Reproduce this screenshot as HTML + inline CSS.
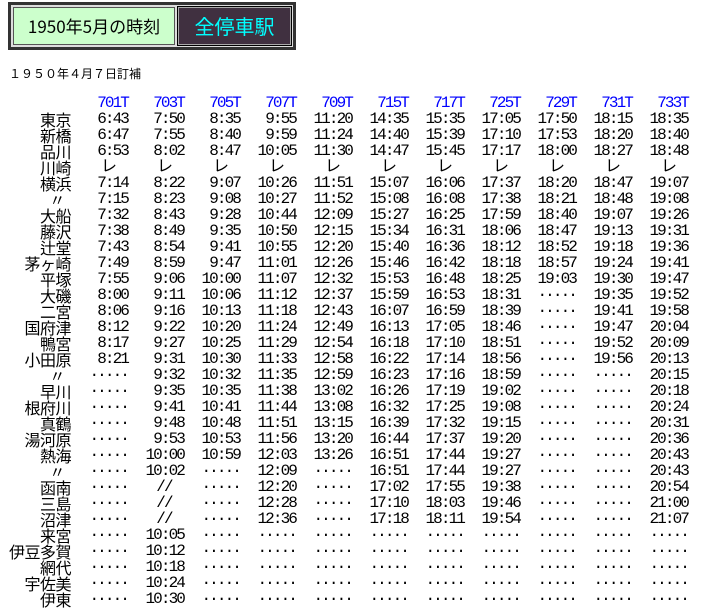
<!DOCTYPE html>
<html><head><meta charset="utf-8"><style>
body{margin:0;background:#fff;font-family:"Liberation Sans","Noto Sans CJK JP",sans-serif;}
.box{position:absolute;left:8px;top:2px;width:282px;height:42px;border:3px solid #333;background:#ddd;}
.g{position:absolute;left:2px;top:2px;width:160px;height:36px;background:#ccffcc;border:1px solid #555;font-size:17px;line-height:36px;text-align:center;color:#000;font-family:"Noto Sans CJK JP",sans-serif;}
.d{position:absolute;left:167px;top:2px;width:111px;height:36px;background:#403040;border:1px solid #aaa;outline:1px solid #000;font-size:20px;line-height:36px;text-align:center;color:#00ffff;font-family:"Noto Sans CJK JP",sans-serif;}
.sub{position:absolute;left:9px;top:65px;font-size:12px;letter-spacing:0px;font-family:"Noto Sans CJK JP",sans-serif;}
table{position:absolute;left:0;top:95px;border-collapse:collapse;table-layout:fixed;width:687px;}
td{padding:0;height:16px;line-height:16px;text-align:right;width:56px;font-family:"Liberation Mono",monospace;font-size:16px;letter-spacing:-1.9px;white-space:nowrap;overflow:visible;}
td:first-child{width:71px;font-family:"Noto Sans CJK JP",sans-serif;letter-spacing:-0.5px;font-size:16px;padding-right:1px;}
tr.h td{color:#00f;}
td.c{text-align:center;padding-left:16px;}
</style></head><body>
<div class="box"><div class="g">1950年5月の時刻</div><div class="d">全停車駅</div></div>
<div class="sub">１９５０年４月７日訂補</div>
<table>
<colgroup><col style="width:72px"><col style="width:56px"><col style="width:56px"><col style="width:56px"><col style="width:56px"><col style="width:56px"><col style="width:56px"><col style="width:56px"><col style="width:56px"><col style="width:56px"><col style="width:56px"><col style="width:56px"></colgroup>
<tr class="h"><td></td><td>701T</td><td>703T</td><td>705T</td><td>707T</td><td>709T</td><td>715T</td><td>717T</td><td>725T</td><td>729T</td><td>731T</td><td>733T</td></tr>
<tr><td>東京</td><td>6:43</td><td>7:50</td><td>8:35</td><td>9:55</td><td>11:20</td><td>14:35</td><td>15:35</td><td>17:05</td><td>17:50</td><td>18:15</td><td>18:35</td></tr>
<tr><td>新橋</td><td>6:47</td><td>7:55</td><td>8:40</td><td>9:59</td><td>11:24</td><td>14:40</td><td>15:39</td><td>17:10</td><td>17:53</td><td>18:20</td><td>18:40</td></tr>
<tr><td>品川</td><td>6:53</td><td>8:02</td><td>8:47</td><td>10:05</td><td>11:30</td><td>14:47</td><td>15:45</td><td>17:17</td><td>18:00</td><td>18:27</td><td>18:48</td></tr>
<tr><td>川崎</td><td class="c">レ</td><td class="c">レ</td><td class="c">レ</td><td class="c">レ</td><td class="c">レ</td><td class="c">レ</td><td class="c">レ</td><td class="c">レ</td><td class="c">レ</td><td class="c">レ</td><td class="c">レ</td></tr>
<tr><td>横浜</td><td>7:14</td><td>8:22</td><td>9:07</td><td>10:26</td><td>11:51</td><td>15:07</td><td>16:06</td><td>17:37</td><td>18:20</td><td>18:47</td><td>19:07</td></tr>
<tr><td>〃&nbsp;&nbsp;</td><td>7:15</td><td>8:23</td><td>9:08</td><td>10:27</td><td>11:52</td><td>15:08</td><td>16:08</td><td>17:38</td><td>18:21</td><td>18:48</td><td>19:08</td></tr>
<tr><td>大船</td><td>7:32</td><td>8:43</td><td>9:28</td><td>10:44</td><td>12:09</td><td>15:27</td><td>16:25</td><td>17:59</td><td>18:40</td><td>19:07</td><td>19:26</td></tr>
<tr><td>藤沢</td><td>7:38</td><td>8:49</td><td>9:35</td><td>10:50</td><td>12:15</td><td>15:34</td><td>16:31</td><td>18:06</td><td>18:47</td><td>19:13</td><td>19:31</td></tr>
<tr><td>辻堂</td><td>7:43</td><td>8:54</td><td>9:41</td><td>10:55</td><td>12:20</td><td>15:40</td><td>16:36</td><td>18:12</td><td>18:52</td><td>19:18</td><td>19:36</td></tr>
<tr><td>茅ヶ崎</td><td>7:49</td><td>8:59</td><td>9:47</td><td>11:01</td><td>12:26</td><td>15:46</td><td>16:42</td><td>18:18</td><td>18:57</td><td>19:24</td><td>19:41</td></tr>
<tr><td>平塚</td><td>7:55</td><td>9:06</td><td>10:00</td><td>11:07</td><td>12:32</td><td>15:53</td><td>16:48</td><td>18:25</td><td>19:03</td><td>19:30</td><td>19:47</td></tr>
<tr><td>大磯</td><td>8:00</td><td>9:11</td><td>10:06</td><td>11:12</td><td>12:37</td><td>15:59</td><td>16:53</td><td>18:31</td><td>·····</td><td>19:35</td><td>19:52</td></tr>
<tr><td>二宮</td><td>8:06</td><td>9:16</td><td>10:13</td><td>11:18</td><td>12:43</td><td>16:07</td><td>16:59</td><td>18:39</td><td>·····</td><td>19:41</td><td>19:58</td></tr>
<tr><td>国府津</td><td>8:12</td><td>9:22</td><td>10:20</td><td>11:24</td><td>12:49</td><td>16:13</td><td>17:05</td><td>18:46</td><td>·····</td><td>19:47</td><td>20:04</td></tr>
<tr><td>鴨宮</td><td>8:17</td><td>9:27</td><td>10:25</td><td>11:29</td><td>12:54</td><td>16:18</td><td>17:10</td><td>18:51</td><td>·····</td><td>19:52</td><td>20:09</td></tr>
<tr><td>小田原</td><td>8:21</td><td>9:31</td><td>10:30</td><td>11:33</td><td>12:58</td><td>16:22</td><td>17:14</td><td>18:56</td><td>·····</td><td>19:56</td><td>20:13</td></tr>
<tr><td>〃&nbsp;&nbsp;</td><td>·····</td><td>9:32</td><td>10:32</td><td>11:35</td><td>12:59</td><td>16:23</td><td>17:16</td><td>18:59</td><td>·····</td><td>·····</td><td>20:15</td></tr>
<tr><td>早川</td><td>·····</td><td>9:35</td><td>10:35</td><td>11:38</td><td>13:02</td><td>16:26</td><td>17:19</td><td>19:02</td><td>·····</td><td>·····</td><td>20:18</td></tr>
<tr><td>根府川</td><td>·····</td><td>9:41</td><td>10:41</td><td>11:44</td><td>13:08</td><td>16:32</td><td>17:25</td><td>19:08</td><td>·····</td><td>·····</td><td>20:24</td></tr>
<tr><td>真鶴</td><td>·····</td><td>9:48</td><td>10:48</td><td>11:51</td><td>13:15</td><td>16:39</td><td>17:32</td><td>19:15</td><td>·····</td><td>·····</td><td>20:31</td></tr>
<tr><td>湯河原</td><td>·····</td><td>9:53</td><td>10:53</td><td>11:56</td><td>13:20</td><td>16:44</td><td>17:37</td><td>19:20</td><td>·····</td><td>·····</td><td>20:36</td></tr>
<tr><td>熱海</td><td>·····</td><td>10:00</td><td>10:59</td><td>12:03</td><td>13:26</td><td>16:51</td><td>17:44</td><td>19:27</td><td>·····</td><td>·····</td><td>20:43</td></tr>
<tr><td>〃&nbsp;&nbsp;</td><td>·····</td><td>10:02</td><td>·····</td><td>12:09</td><td>·····</td><td>16:51</td><td>17:44</td><td>19:27</td><td>·····</td><td>·····</td><td>20:43</td></tr>
<tr><td>函南</td><td>·····</td><td class="c">//</td><td>·····</td><td>12:20</td><td>·····</td><td>17:02</td><td>17:55</td><td>19:38</td><td>·····</td><td>·····</td><td>20:54</td></tr>
<tr><td>三島</td><td>·····</td><td class="c">//</td><td>·····</td><td>12:28</td><td>·····</td><td>17:10</td><td>18:03</td><td>19:46</td><td>·····</td><td>·····</td><td>21:00</td></tr>
<tr><td>沼津</td><td>·····</td><td class="c">//</td><td>·····</td><td>12:36</td><td>·····</td><td>17:18</td><td>18:11</td><td>19:54</td><td>·····</td><td>·····</td><td>21:07</td></tr>
<tr><td>来宮</td><td>·····</td><td>10:05</td><td>·····</td><td>·····</td><td>·····</td><td>·····</td><td>·····</td><td>·····</td><td>·····</td><td>·····</td><td>·····</td></tr>
<tr><td>伊豆多賀</td><td>·····</td><td>10:12</td><td>·····</td><td>·····</td><td>·····</td><td>·····</td><td>·····</td><td>·····</td><td>·····</td><td>·····</td><td>·····</td></tr>
<tr><td>網代</td><td>·····</td><td>10:18</td><td>·····</td><td>·····</td><td>·····</td><td>·····</td><td>·····</td><td>·····</td><td>·····</td><td>·····</td><td>·····</td></tr>
<tr><td>宇佐美</td><td>·····</td><td>10:24</td><td>·····</td><td>·····</td><td>·····</td><td>·····</td><td>·····</td><td>·····</td><td>·····</td><td>·····</td><td>·····</td></tr>
<tr><td>伊東</td><td>·····</td><td>10:30</td><td>·····</td><td>·····</td><td>·····</td><td>·····</td><td>·····</td><td>·····</td><td>·····</td><td>·····</td><td>·····</td></tr>
</table>
</body></html>
